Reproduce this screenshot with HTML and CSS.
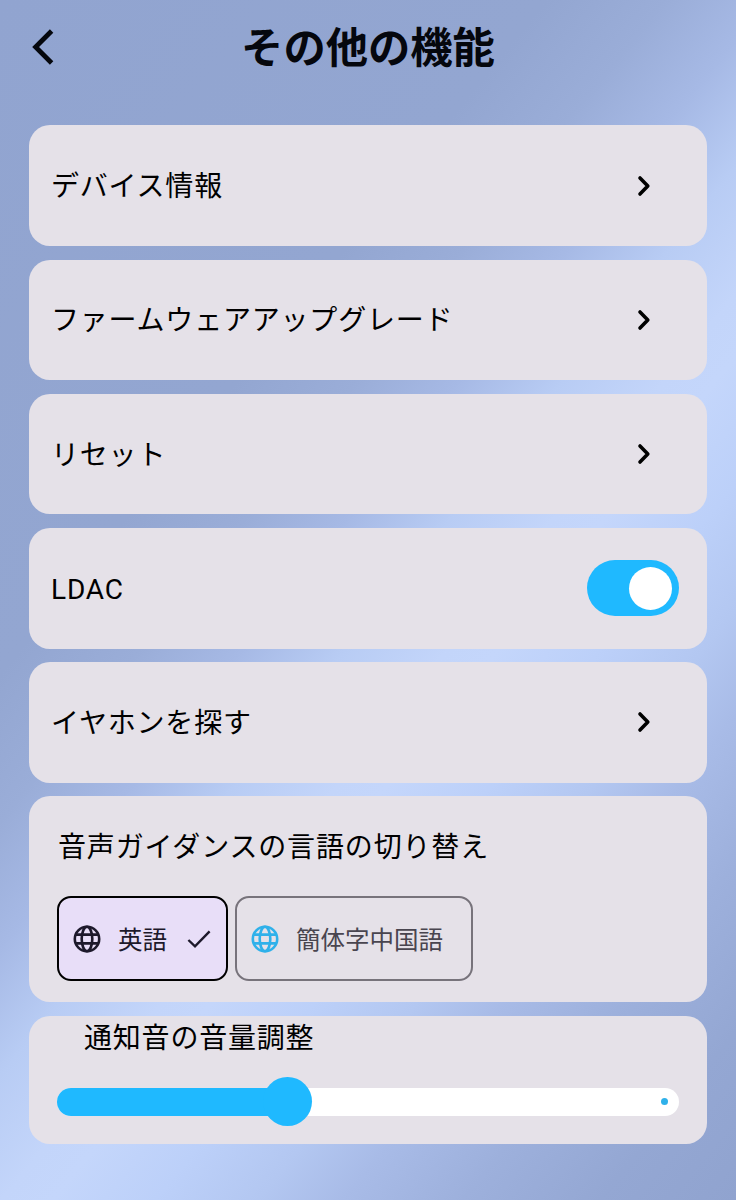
FILE: index.html
```html
<!DOCTYPE html>
<html lang="ja">
<head>
  <meta charset="UTF-8">
  <meta name="viewport" content="width=device-width, initial-scale=1.0">
  <title>その他の機能</title>
  <link rel="stylesheet" href="styles.css">
</head>
<body>

<svg class="icon-defs" width="0" height="0">
  <symbol id="chevron" viewBox="0 0 16 24">
    <path d="M4 4 L11.8 12 L4 20" fill="none" stroke="currentColor" stroke-width="3.6" stroke-linecap="round" stroke-linejoin="round"/>
  </symbol>
  <symbol id="globe" viewBox="0 0 28 28">
    <g fill="none" stroke="currentColor" stroke-width="2.6">
      <circle cx="14" cy="14" r="12.2"/>
      <ellipse cx="14" cy="14" rx="5.3" ry="12.2"/>
      <path d="M2.7 9.6 H25.3 M2.7 18.4 H25.3"/>
    </g>
  </symbol>
</svg>

<header class="header">
  <button class="back-button" aria-label="戻る">
    <svg width="24" height="38" viewBox="0 0 24 38">
      <path d="M20.6 3 L4.6 19 L20.6 35" fill="none" stroke="currentColor" stroke-width="4.8"/>
    </svg>
  </button>
  <h1 class="title">その他の機能</h1>
</header>

<main class="settings">
  <div class="card row">
    <span class="label">デバイス情報</span>
    <svg class="chevron"><use href="#chevron"/></svg>
  </div>
  <div class="card row">
    <span class="label">ファームウェアアップグレード</span>
    <svg class="chevron"><use href="#chevron"/></svg>
  </div>
  <div class="card row">
    <span class="label">リセット</span>
    <svg class="chevron"><use href="#chevron"/></svg>
  </div>
  <div class="card row">
    <span class="label">LDAC</span>
    <div class="switch"><div class="switch-thumb"></div></div>
  </div>
  <div class="card row">
    <span class="label">イヤホンを探す</span>
    <svg class="chevron"><use href="#chevron"/></svg>
  </div>

  <div class="card language">
    <div class="language-title">音声ガイダンスの言語の切り替え</div>
    <div class="chips">
      <button class="chip selected">
        <svg class="globe"><use href="#globe"/></svg>
        <span>英語</span>
        <svg class="check" viewBox="0 0 24 20">
          <path d="M1.4 11 L8 17.3 L22.6 2.4" fill="none" stroke="currentColor" stroke-width="2.4"/>
        </svg>
      </button>
      <button class="chip">
        <svg class="globe"><use href="#globe"/></svg>
        <span>簡体字中国語</span>
      </button>
    </div>
  </div>

  <div class="card volume">
    <div class="volume-title">通知音の音量調整</div>
    <div class="slider">
      <div class="slider-fill"></div>
      <div class="slider-thumb"></div>
      <div class="slider-end"></div>
    </div>
  </div>
</main>

</body>
</html>
```
FILE: styles.css
```css
* {
  box-sizing: border-box;
}

body {
  margin: 0;
  height: 1200px;
  overflow: hidden;
  font-family: Roboto, "Noto Sans CJK JP", sans-serif;
  color: #000;
  background: linear-gradient(129deg, #91a4d0 0%, #93a6d1 32%, #9aadd8 39%, #a6b9e5 45%, #b8ccf4 51%, #c3d5fa 57%, #c4d6fb 60%, #bcd0f9 66%, #b3c7f1 72%, #a8bbe7 77%, #9db0dc 84%, #94a7d3 92%, #90a3cf 100%);
}

button {
  font-family: inherit;
  padding: 0;
  margin: 0;
  background: none;
  border: none;
  cursor: pointer;
}

.icon-defs {
  display: block;
}

.header {
  display: grid;
  grid-template-columns: 72px 1fr 72px;
  align-items: center;
  height: 94px;
}

.back-button {
  display: flex;
  padding-left: 31px;
  color: #05070d;
}

.title {
  margin: 0;
  padding-top: 3px;
  font-size: 42.3px;
  line-height: 60px;
  font-weight: 700;
  text-align: center;
  color: #05070d;
}

.settings {
  display: flex;
  flex-direction: column;
  gap: 13.6px;
  padding: 31.4px 29px 0;
}

.card {
  background: #e5e1e8;
  border-radius: 21px;
  font-size: 28px;
  letter-spacing: 0.8px;
  line-height: 42px;
}

.row {
  display: flex;
  align-items: center;
  justify-content: space-between;
  height: 120.6px;
  padding: 0 28px 0 22px;
}

.label {
  padding-top: 3px;
}

.chevron {
  width: 16px;
  height: 24px;
  margin-right: 27px;
}

.switch {
  display: flex;
  justify-content: flex-end;
  align-items: center;
  width: 92px;
  height: 56px;
  padding-right: 7px;
  border-radius: 28px;
  background: #1fb9ff;
}

.switch-thumb {
  width: 43px;
  height: 43px;
  border-radius: 50%;
  background: #fff;
}

.language {
  height: 206px;
  padding: 31px 28px 0;
}

.language-title {
  padding-left: 1px;
  letter-spacing: 0.85px;
}

.chips {
  display: flex;
  gap: 7px;
  margin-top: 27px;
}

.chip {
  display: flex;
  align-items: center;
  width: 238px;
  height: 85px;
  padding-left: 14px;
  border: 2px solid #77737b;
  border-radius: 14px;
  font-size: 24.5px;
  color: #49454f;
}

.chip .globe {
  width: 28px;
  height: 28px;
  margin-right: 17px;
  color: #2fb1ea;
}

.chip span {
  padding-bottom: 1px;
}

.chip.selected {
  width: 171px;
  border-color: #000;
  background: #e8def8;
  color: #1d192b;
}

.chip.selected .globe {
  color: #1d192b;
}

.check {
  width: 24px;
  height: 20px;
  margin-left: 20px;
}

.volume {
  height: 128px;
  padding: 2px 28px 0;
}

.volume-title {
  padding-left: 27px;
}

.slider {
  display: flex;
  align-items: center;
  height: 28px;
  margin-top: 28px;
  border-radius: 14px;
  background: #fff;
}

.slider-fill {
  width: 230px;
  height: 28px;
  border-radius: 14px 0 0 14px;
  background: #1fb9ff;
}

.slider-thumb {
  width: 49px;
  height: 49px;
  margin-left: -24px;
  border-radius: 50%;
  background: #1fb9ff;
}

.slider-end {
  width: 7px;
  height: 7px;
  margin-left: auto;
  margin-right: 11px;
  border-radius: 50%;
  background: #2fb1ea;
}
```
